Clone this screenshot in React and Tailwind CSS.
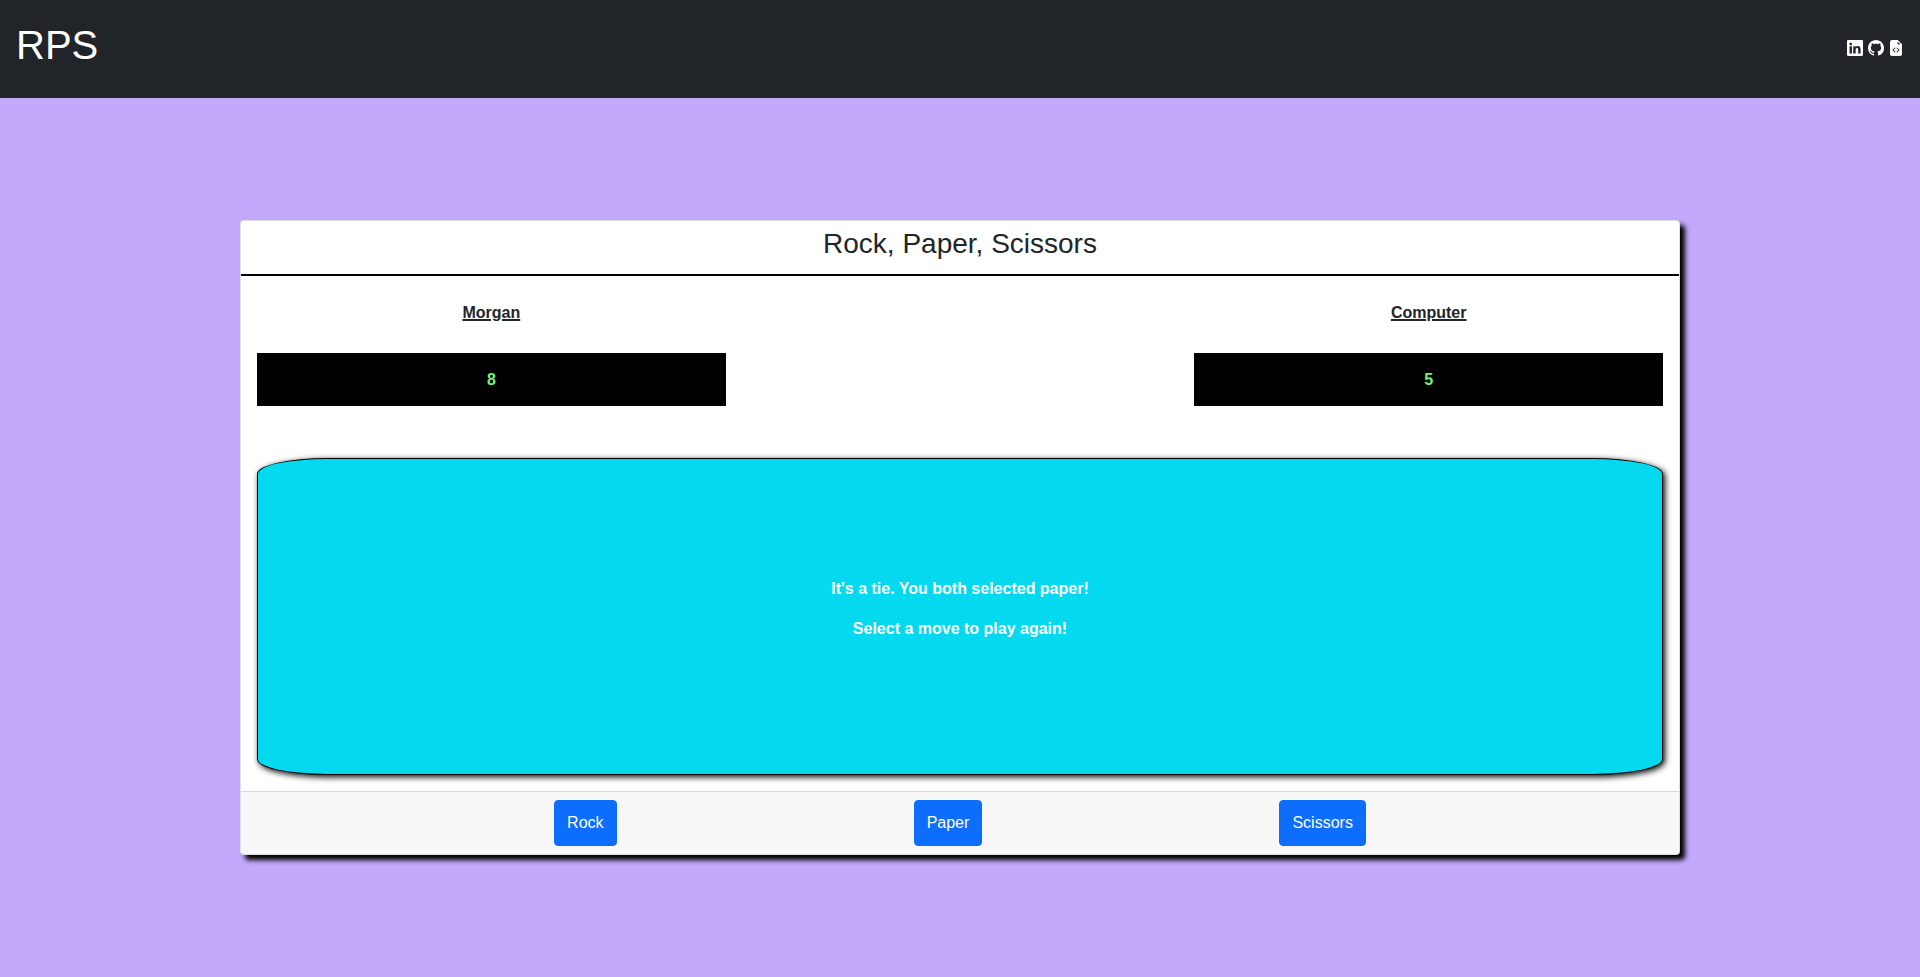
import { BsLinkedin, BsGithub, BsFileEarmarkCodeFill } from "react-icons/bs";

const players = [
  { name: "Morgan", score: 8 },
  { name: "Computer", score: 5 },
];

const moves = ["Rock", "Paper", "Scissors"];

function Header() {
  return (
    <header className="flex items-end justify-between bg-[#212529] px-4 pt-4 pb-6 text-white">
      <h1 className="text-[40px] leading-[58px]">RPS</h1>
      <nav aria-label="Profile links" className="pb-[13px] text-base leading-6">
        <a href="#linkedin" aria-label="LinkedIn">
          <BsLinkedin className="inline align-[-2px]" />
        </a>{" "}
        <a href="#github" aria-label="GitHub">
          <BsGithub className="inline align-[-2px]" />
        </a>{" "}
        <a href="#source" aria-label="Source code">
          <BsFileEarmarkCodeFill className="inline align-[-2px]" />
        </a>
      </nav>
    </header>
  );
}

function Score({ name, score }) {
  return (
    <div className="w-1/3 text-center font-bold">
      <h3 className="underline decoration-2">{name}</h3>
      <p className="mt-7 bg-black pt-[15px] pb-[14px] text-[#71f571]">{score}</p>
    </div>
  );
}

export default function App() {
  return (
    <div className="flex min-h-screen flex-col bg-[#c2a9fc] font-['Liberation_Sans',Arial,sans-serif] text-base leading-6 text-[#212529]">
      <Header />
      <main className="flex grow items-center justify-center">
        <section className="w-3/4 rounded border border-black/[.125] bg-white shadow-[5px_5px_5px_black]">
          <h2 className="border-b-2 border-black pt-1 pb-3 text-center text-[28px] leading-[37px]">
            Rock, Paper, Scissors
          </h2>
          <div className="px-4 pt-[25px] pb-4">
            <div className="flex justify-between">
              {players.map((p) => (
                <Score key={p.name} name={p.name} score={p.score} />
              ))}
            </div>
            <div
              role="status"
              className="mt-[52px] flex min-h-[317px] flex-col items-center justify-center rounded-[5%] border border-black bg-[#04d9ef] text-center font-bold text-white shadow-[2px_2px_6px_black]"
            >
              <p className="mb-4">It's a tie. You both selected paper!</p>
              <p className="mb-4">Select a move to play again!</p>
            </div>
          </div>
          <footer className="flex justify-evenly border-t border-black/[.125] bg-black/[.03] px-4 py-2">
            {moves.map((move) => (
              <button
                key={move}
                type="button"
                className="rounded border border-[#0d6efd] bg-[#0d6efd] px-3 py-[10px] text-white"
              >
                {move}
              </button>
            ))}
          </footer>
        </section>
      </main>
    </div>
  );
}
